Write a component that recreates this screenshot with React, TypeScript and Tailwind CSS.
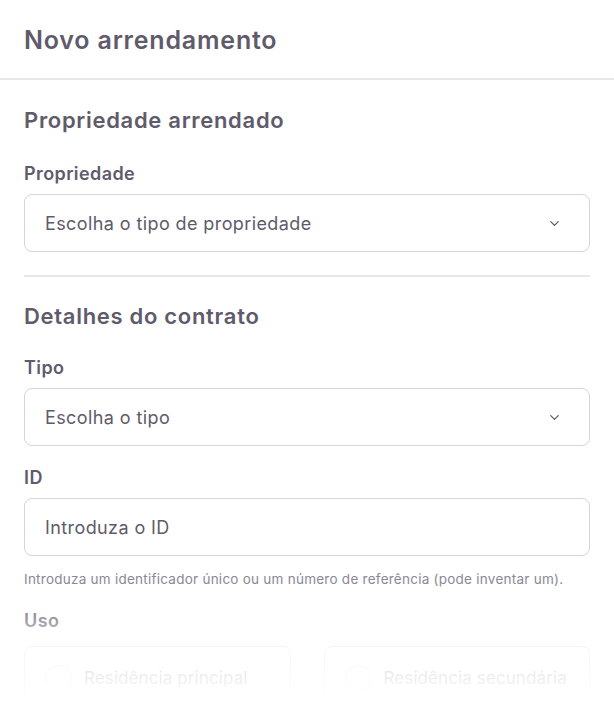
import { ChevronDown } from 'lucide-react';

function Select({ placeholder }: { placeholder: string }) {
  return (
    <div className="flex h-[58px] items-center justify-between rounded-lg border border-[#d6d5da] px-5">
      <span className="text-[18px] tracking-[0.4px] text-[#5e5b69]">{placeholder}</span>
      <ChevronDown size={15} strokeWidth={2} className="mr-[7px] text-[#5e5b69]" />
    </div>
  );
}

function Label({ children, className = 'mb-[7px]' }: { children: React.ReactNode; className?: string }) {
  return <div className={`${className} text-[18px] font-semibold tracking-[0.4px] text-[#5f5b6b]`}>{children}</div>;
}

function RadioCard({ label }: { label: string }) {
  return (
    <div className="flex h-[64px] items-center gap-3 rounded-lg border border-[#d6d5da] px-5">
      <span className="h-[27px] w-[27px] shrink-0 rounded-full border border-[#d6d5da]" />
      <span className="whitespace-nowrap text-[17px] tracking-[0.1px] text-[#5e5b69]">{label}</span>
    </div>
  );
}

export default function App() {
  return (
    <div className="relative h-[702px] w-[614px] overflow-hidden bg-white font-['Inter',sans-serif]">
      <div className="flex h-[80px] items-center border-b-2 border-[#e8e8ea] px-6 pt-1">
        <h1 className="text-[25px] font-semibold tracking-[0.8px] text-[#5f5b6b]">Novo arrendamento</h1>
      </div>

      <div className="px-6">
        <h2 className="mt-[24px] text-[22px] font-semibold tracking-[0.7px] text-[#5f5b6b]">Propriedade arrendado</h2>
        <div className="mt-[23px]">
          <Label>Propriedade</Label>
          <Select placeholder="Escolha o tipo de propriedade" />
        </div>

        <div className="mb-[23px] mt-[23px] h-[2px] bg-[#e8e8ea]" />

        <h2 className="text-[22px] font-semibold tracking-[0.7px] text-[#5f5b6b]">Detalhes do contrato</h2>
        <div className="mt-[21px]">
          <Label>Tipo</Label>
          <Select placeholder="Escolha o tipo" />
        </div>
        <div className="mt-[18px]">
          <Label>ID</Label>
          <div className="flex h-[58px] items-center rounded-lg border border-[#d6d5da] px-5">
            <span className="text-[18px] tracking-[0.4px] text-[#5e5b69]">Introduza o ID</span>
          </div>
          <p className="mt-[13px] text-[13.5px] tracking-[0.25px] text-[#8b8896]">
            Introduza um identificador único ou um número de referência (pode inventar um).
          </p>
        </div>
        <div className="mt-[18px]">
          <Label className="mb-[12px]">Uso</Label>
          <div className="grid grid-cols-2 gap-[33px]">
            <RadioCard label="Residência principal" />
            <RadioCard label="Residência secundária" />
          </div>
        </div>
      </div>

      <div className="pointer-events-none absolute inset-x-0 bottom-0 h-[112px] bg-gradient-to-b from-white/0 via-white/75 to-white" />
    </div>
  );
}
